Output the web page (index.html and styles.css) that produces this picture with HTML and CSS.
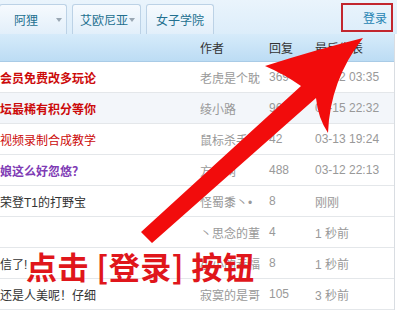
FILE: index.html
```html
<!DOCTYPE html>
<html>
	<head>
		<meta charset="utf-8"/>
		<title>论坛帖子列表</title>
		<link rel="stylesheet" href="styles.css">
	</head>
	<body>
		<div id="page">
			<div id="tabBar">
				<div class="tab">阿狸<span class="caret"></span></div>
				<div class="tab tab2">艾欧尼亚<span class="caret"></span></div>
				<div class="tab tab3">女子学院</div>
				<a class="login" href="#">登录</a>
			</div>
			<div id="threadList">
				<div class="row head">
					<div class="title"></div>
					<div class="author">作者</div>
					<div class="replies">回复</div>
					<div class="last">最后发表</div>
				</div>
				<div class="row">
					<div class="title red bold">会员免费改多玩论</div>
					<div class="author">老虎是个耽</div>
					<div class="replies">369</div>
					<div class="last">03-12 03:35</div>
				</div>
				<div class="row alt">
					<div class="title red bold">坛最稀有积分等你</div>
					<div class="author">绫小路</div>
					<div class="replies">96</div>
					<div class="last">03-15 22:32</div>
				</div>
				<div class="row">
					<div class="title red">视频录制合成教学</div>
					<div class="author">鼠标杀手</div>
					<div class="replies">42</div>
					<div class="last">03-13 19:24</div>
				</div>
				<div class="row">
					<div class="title purple bold">娘这么好忽悠？</div>
					<div class="author">方舟网</div>
					<div class="replies">488</div>
					<div class="last">03-12 22:13</div>
				</div>
				<div class="row">
					<div class="title">荣登T1的打野宝</div>
					<div class="author">怪蜀黍丶•</div>
					<div class="replies">8</div>
					<div class="last">刚刚</div>
				</div>
				<div class="row">
					<div class="title"></div>
					<div class="author">丶思念的菫</div>
					<div class="replies">4</div>
					<div class="last">1 秒前</div>
				</div>
				<div class="row">
					<div class="title">信了!</div>
					<div class="author">小小的幸福</div>
					<div class="replies">8</div>
					<div class="last">1 秒前</div>
				</div>
				<div class="row">
					<div class="title">还是人美呢！仔细</div>
					<div class="author">寂寞的是哥</div>
					<div class="replies">105</div>
					<div class="last">3 秒前</div>
				</div>
			</div>

			<!--annotation over the list-->
			<svg id="arrow" width="397" height="311" viewBox="0 0 397 311">
				<path d="M141,232 L152,243 L316,98 Q318,118 328,133 Q330,80 363,38 Q315,50 265,66 Q284,74 301,86 Z" fill="#f20c0c"/>
			</svg>
			<div id="hint">点击 [登录] 按钮</div>
		</div>
	</body>
</html>
```

FILE: styles.css
```css
/*main layout*/
body{
	margin: 0;
	padding: 0;
	font-family: "Liberation Sans", "Noto Sans CJK SC", sans-serif;
	font-size: 12px;
	color: #333;
	background: #fff;
}
#page{
	position: relative;
	width: 397px;
	height: 311px;
	overflow: hidden;
}

/*tabs*/
#tabBar{
	display: flex;
	align-items: flex-end;
	height: 34px;
	background: linear-gradient(#eaf4fc, #dcedfa);
	gap: 5px;
}
.tab{
	display: flex;
	align-items: center;
	height: 29px;
	width: 52px;
	margin-left: -1px;
	padding-left: 14px;
	border: solid 1px #bcd2e6;
	border-bottom: none;
	border-radius: 3px 3px 0 0;
	background: linear-gradient(#f6fafe, #e2effa);
	color: #23708f;
	box-sizing: content-box;
}
.tab2{
	margin-left: 0;
	width: 60px;
	padding-left: 7px;
}
.tab3{
	margin-left: 0;
	width: 57px;
	padding-left: 9px;
}
.caret{
	margin-left: auto;
	margin-right: 4px;
	border-left: 3px solid transparent;
	border-right: 3px solid transparent;
	border-top: 4px solid #9aa7b3;
}
.tab2 .caret{ margin-right: 5px;}
.login{
	margin-left: auto;
	margin-right: 4px;
	align-self: flex-start;
	margin-top: 3px;
	width: 44px;
	height: 25px;
	padding-right: 4px;
	border: solid 2px #c2262e;
	display: flex;
	align-items: center;
	justify-content: flex-end;
	color: #2684b3;
	text-decoration: none;
	box-sizing: content-box;
}

/*thread list*/
#threadList{
	width: 394px;
	border-right: solid 1px #d9dde2;
}
.row{
	display: flex;
	align-items: center;
	height: 30px;
	border-bottom: solid 1px #e4e7ea;
	color: #999;
}
.row.head{
	height: 27px;
	background: linear-gradient(#d6ebfa, #bcdcf4);
	border-bottom: solid 1px #a9cbe6;
	color: #333;
}
.row.alt{ background-color: #f3f6fa;}
.title{
	width: 200px;
	color: #333;
	white-space: nowrap;
	overflow: hidden;
}
.author{ width: 69px; white-space: nowrap; overflow: hidden;}
.replies{ width: 46px;}
.last{ flex: 1;}
.red{ color: #cc0a0a;}
.purple{ color: #7f3cb5;}
.bold{ font-weight: bold;}

/*annotation*/
#arrow{
	position: absolute;
	left: 0;
	top: 0;
}
#hint{
	position: absolute;
	left: 26px;
	top: 250px;
	font-size: 31px;
	line-height: 31px;
	font-weight: bold;
	letter-spacing: 0.5px;
	color: #e0161b;
	white-space: nowrap;
	font-family: "Noto Sans CJK SC", sans-serif;
}
```
